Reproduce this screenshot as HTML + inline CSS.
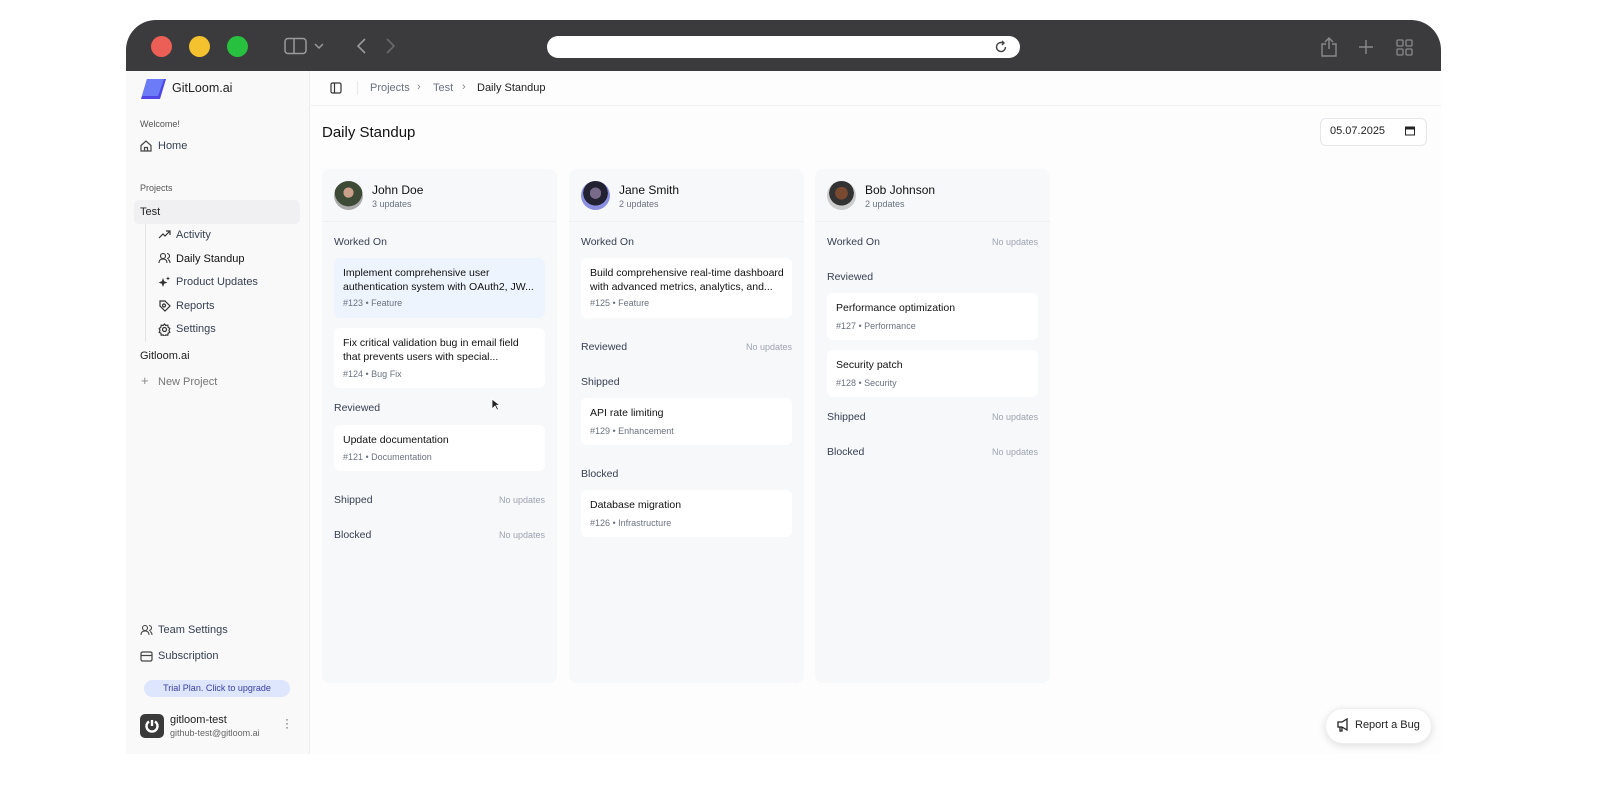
<!DOCTYPE html>
<html><head><meta charset="utf-8"><style>
*{box-sizing:border-box;margin:0;padding:0}
body{width:1600px;height:800px;background:#fff;font-family:"Liberation Sans",sans-serif;position:relative;overflow:hidden;color:#111827}
.a{position:absolute}
.frame{left:126px;top:20px;width:1315px;height:734px;border-radius:30px 30px 0 0;overflow:hidden;background:#fdfdfd}
.bar{left:0;top:0;width:1315px;height:51px;background:#3b3b3d}
.dot{width:21px;height:21px;border-radius:50%;top:16px}
.side{left:0;top:51px;width:184px;height:683px;background:#f9f9fa;border-right:1px solid #ececee}
.t{position:absolute;white-space:nowrap}
.s11{font-size:11px}.s10{font-size:9.5px}
.col{width:235px;height:514px;top:149px;background:#f7f8fa;border-radius:8px}
.ch{position:absolute;left:0;top:0;width:235px;height:53px;border-bottom:1px solid #eef0f2}
.card{position:absolute;left:12px;width:211px;background:#fff;border-radius:6px}
.ct{position:absolute;left:9px;top:9px;font-size:10.5px;line-height:13.5px;color:#111}
.cm{position:absolute;left:9px;font-size:9px;color:#6b7280}
.sec{position:absolute;left:12px;font-size:10.5px;color:#374151}
.nu{position:absolute;right:12px;font-size:9px;color:#9ca3af}
.av{position:absolute;left:12px;top:12px;width:29px;height:29px;border-radius:50%}
.nm{position:absolute;left:50px;top:14px;font-size:12px;color:#111}
.up{position:absolute;left:50px;top:30px;font-size:9px;color:#6b7280}
.nav{font-size:11px;color:#374151}
</style></head><body>
<div class="a frame">
 <div class="a bar">
  <div class="a dot" style="left:25px;background:#ec5f56"></div>
  <div class="a dot" style="left:63px;background:#f4c22e"></div>
  <div class="a dot" style="left:101px;background:#27c13f"></div>
  <svg class="a" style="left:158px;top:17px" width="46" height="18" viewBox="0 0 46 18" fill="none" stroke="#9a9a9c" stroke-width="1.5"><rect x="1" y="1.5" width="21" height="15" rx="3"/><line x1="10" y1="1.5" x2="10" y2="16.5"/><path d="M31 7l4 4 4-4"/></svg>
  <svg class="a" style="left:228px;top:18px" width="45" height="16" fill="none" stroke-width="1.6"><path d="M11 1L4 8l7 7" stroke="#9a9a9c"/><path d="M33 1l7 7-7 7" stroke="#6a6a6c"/></svg>
  <div class="a" style="left:421px;top:16px;width:473px;height:22px;background:#fff;border-radius:11px"></div>
  <svg class="a" style="left:868px;top:20px" width="14" height="14" fill="none" stroke="#444" stroke-width="1.4"><path d="M11.5 7A4.5 4.5 0 1 1 9 3"/><path d="M8 1l2 2-2 2"/></svg>
  <svg class="a" style="left:1194px;top:17px" width="18" height="20" fill="none" stroke="#8a8a8c" stroke-width="1.4"><path d="M6 7H2v12h14V7h-4M9 12V1M5 5l4-4 4 4"/></svg>
  <svg class="a" style="left:1232px;top:19px" width="16" height="16" stroke="#8a8a8c" stroke-width="1.4"><path d="M8 1v14M1 8h14"/></svg>
  <svg class="a" style="left:1270px;top:19px" width="17" height="17" fill="none" stroke="#8a8a8c" stroke-width="1.3"><rect x="1" y="1" width="6" height="6" rx="1"/><rect x="10" y="1" width="6" height="6" rx="1"/><rect x="1" y="10" width="6" height="6" rx="1"/><rect x="10" y="10" width="6" height="6" rx="1"/></svg>
 </div>
 <div class="a side">
  <svg class="a" style="left:14px;top:7px" width="26" height="22"><polygon points="7,1 26,1 20,21 1,21" fill="#4f46e5"/><polygon points="7,1 24,1 18,18 2,18" fill="#6b7cf6"/></svg>
  <div class="t" style="left:46px;top:10px;font-size:12.5px;color:#222">GitLoom.ai</div>
  <div class="t" style="left:14px;top:48px;font-size:9px;color:#555">Welcome!</div>
  <svg class="a" style="left:14px;top:69px" width="12" height="12" fill="none" stroke="#444" stroke-width="1.2"><path d="M1 5.5L6 1l5 4.5V11H1z"/><path d="M4.5 11V7.5h3V11"/></svg>
  <div class="t nav" style="left:32px;top:69px">Home</div>
  <div class="t" style="left:14px;top:112px;font-size:9px;color:#555">Projects</div>
  <div class="a" style="left:8px;top:129px;width:166px;height:24px;background:#f0f0f2;border-radius:5px"></div>
  <div class="t nav" style="left:14px;top:135px;color:#222">Test</div>
  <div class="a" style="left:19px;top:153px;width:1px;height:118px;background:#e4e4e7"></div>
  <svg class="a" style="left:32px;top:159px" width="13" height="10" fill="none" stroke="#333" stroke-width="1.2"><path d="M1 8l4-4 2 2 5-5M8 1h4v4"/></svg>
  <div class="t nav" style="left:50px;top:158px">Activity</div>
  <svg class="a" style="left:32px;top:181px" width="13" height="12" fill="none" stroke="#333" stroke-width="1.1"><circle cx="5" cy="4" r="2.5"/><path d="M1 11c0-3 2-4 4-4s4 1 4 4M9 1.5a2.5 2.5 0 0 1 0 5M12 11c0-2-1-3-2-3.5"/></svg>
  <div class="t nav" style="left:50px;top:182px;color:#111">Daily Standup</div>
  <svg class="a" style="left:32px;top:205px" width="13" height="12" fill="#333"><path d="M5 2l1.2 3.3L9.5 6.5 6.2 7.7 5 11 3.8 7.7.5 6.5l3.3-1.2z"/><path d="M10 .5l.6 1.4 1.4.6-1.4.6-.6 1.4-.6-1.4L8 2.5l1.4-.6z"/></svg>
  <div class="t nav" style="left:50px;top:205px">Product Updates</div>
  <svg class="a" style="left:32px;top:228px" width="13" height="13" fill="none" stroke="#333" stroke-width="1.2"><path d="M2 2l5 0 5 5-5 5-5-5z"/><circle cx="6" cy="6.5" r="1.5"/></svg>
  <div class="t nav" style="left:50px;top:229px">Reports</div>
  <svg class="a" style="left:32px;top:252px" width="13" height="13" fill="none" stroke="#333" stroke-width="1.2"><circle cx="6.5" cy="6.5" r="2"/><path d="M6.5 1l1.3 1.5 2-.3.3 2L11.8 5.5 11 7.5l.8 1.8-1.7.9-.3 2-2-.3-1.3 1.6-1.3-1.6-2 .3-.3-2-1.7-.9L2 7.5 1.2 5.5 2.9 4.2l.3-2 2 .3z"/></svg>
  <div class="t nav" style="left:50px;top:252px">Settings</div>
  <div class="t nav" style="left:14px;top:279px;color:#222">Gitloom.ai</div>
  <div class="t" style="left:15px;top:302px;font-size:13px;color:#888">+</div>
  <div class="t nav" style="left:32px;top:305px;color:#777">New Project</div>
  <svg class="a" style="left:14px;top:553px" width="13" height="12" fill="none" stroke="#444" stroke-width="1.1"><circle cx="5" cy="4" r="2.5"/><path d="M1 11c0-3 2-4 4-4s4 1 4 4M9 1.5a2.5 2.5 0 0 1 0 5M12 11c0-2-1-3-2-3.5"/></svg>
  <div class="t nav" style="left:32px;top:553px">Team Settings</div>
  <svg class="a" style="left:14px;top:580px" width="13" height="11" fill="none" stroke="#444" stroke-width="1.2"><rect x="1" y="1" width="11" height="9" rx="1.5"/><path d="M1 4.5h11"/></svg>
  <div class="t nav" style="left:32px;top:579px">Subscription</div>
  <div class="a" style="left:18px;top:609px;width:146px;height:17px;background:#dde6fd;border-radius:9px;font-size:9px;color:#3b3fa0;text-align:center;line-height:17px">Trial Plan. Click to upgrade</div>
  <div class="a" style="left:14px;top:643px;width:24px;height:24px;background:#3a3a3a;border-radius:5px"></div>
  <svg class="a" style="left:18px;top:647px" width="16" height="16" fill="none" stroke="#fff" stroke-width="2.4"><path d="M5 3.5A5.5 5.5 0 1 0 11 3.5"/><path d="M8 2v6"/></svg>
  <div class="t" style="left:44px;top:643px;font-size:11px;color:#222">gitloom-test</div>
  <div class="t" style="left:44px;top:657px;font-size:9px;color:#666">github-test@gitloom.ai</div>
  <div class="t" style="left:159px;top:646px;font-size:12px;color:#555;line-height:4px">·<br>·<br>·</div>
 </div>
 <div class="a" style="left:185px;top:51px;width:1130px;height:35px;border-bottom:1px solid #eef0f2"></div>
 <svg class="a" style="left:204px;top:62px" width="12" height="12" fill="none" stroke="#333" stroke-width="1.2"><rect x="1" y="1" width="10" height="10" rx="1.5"/><path d="M4.5 1v10"/></svg>
 <div class="a" style="left:231px;top:61px;width:1px;height:14px;background:#e5e7eb"></div>
 <div class="t" style="left:244px;top:62px;font-size:11px;color:#6b7280">Projects</div>
 <div class="t" style="left:291px;top:61px;font-size:11px;color:#888">›</div>
 <div class="t" style="left:307px;top:62px;font-size:11px;color:#6b7280">Test</div>
 <div class="t" style="left:336px;top:61px;font-size:11px;color:#888">›</div>
 <div class="t" style="left:351px;top:62px;font-size:11px;color:#222">Daily Standup</div>
 <div class="t" style="left:196px;top:104px;font-size:15px;color:#111">Daily Standup</div>
 <div class="a" style="left:1194px;top:98px;width:107px;height:28px;border:1px solid #e5e7eb;border-radius:6px;background:#fff"></div>
 <div class="t" style="left:1204px;top:105px;font-size:11px;color:#222">05.07.2025</div>
 <svg class="a" style="left:1279px;top:106px" width="10" height="10"><rect x="0.5" y="1" width="9" height="8" fill="none" stroke="#222"/><rect x="0.5" y="1" width="9" height="2.5" fill="#222"/></svg>

 <!-- col1 -->
 <div class="a col" style="left:196px">
  <div class="ch"><div class="av" style="background:radial-gradient(circle at 50% 40%,#caa08a 0 22%,#3d4a36 23% 60%,#aaa 61%)"></div><div class="nm">John Doe</div><div class="up">3 updates</div></div>
  <div class="sec" style="top:67px">Worked On</div>
  <div class="card" style="top:89px;height:60px;background:#eef4fd"><div class="ct">Implement comprehensive user<br>authentication system with OAuth2, JW...</div><div class="cm" style="top:40px">#123 • Feature</div></div>
  <div class="card" style="top:159px;height:60px"><div class="ct">Fix critical validation bug in email field<br>that prevents users with special...</div><div class="cm" style="top:41px">#124 • Bug Fix</div></div>
  <div class="sec" style="top:233px">Reviewed</div>
  <div class="card" style="top:256px;height:46px"><div class="ct">Update documentation</div><div class="cm" style="top:27px">#121 • Documentation</div></div>
  <div class="sec" style="top:325px">Shipped</div><div class="nu" style="top:326px">No updates</div>
  <div class="sec" style="top:360px">Blocked</div><div class="nu" style="top:361px">No updates</div>
 </div>
 <!-- col2 -->
 <div class="a col" style="left:443px">
  <div class="ch"><div class="av" style="background:radial-gradient(circle at 50% 42%,#7a6a8a 0 25%,#223 26% 55%,#8a8fe0 56%)"></div><div class="nm">Jane Smith</div><div class="up">2 updates</div></div>
  <div class="sec" style="top:67px">Worked On</div>
  <div class="card" style="top:89px;height:60px"><div class="ct">Build comprehensive real-time dashboard<br>with advanced metrics, analytics, and...</div><div class="cm" style="top:40px">#125 • Feature</div></div>
  <div class="sec" style="top:172px">Reviewed</div><div class="nu" style="top:173px">No updates</div>
  <div class="sec" style="top:207px">Shipped</div>
  <div class="card" style="top:229px;height:47px"><div class="ct">API rate limiting</div><div class="cm" style="top:28px">#129 • Enhancement</div></div>
  <div class="sec" style="top:299px">Blocked</div>
  <div class="card" style="top:321px;height:47px"><div class="ct">Database migration</div><div class="cm" style="top:28px">#126 • Infrastructure</div></div>
 </div>
 <!-- col3 -->
 <div class="a col" style="left:689px">
  <div class="ch"><div class="av" style="background:radial-gradient(circle at 50% 42%,#7a4a30 0 28%,#333 29% 55%,#ccc 56%)"></div><div class="nm">Bob Johnson</div><div class="up">2 updates</div></div>
  <div class="sec" style="top:67px">Worked On</div><div class="nu" style="top:68px">No updates</div>
  <div class="sec" style="top:102px">Reviewed</div>
  <div class="card" style="top:124px;height:47px"><div class="ct">Performance optimization</div><div class="cm" style="top:28px">#127 • Performance</div></div>
  <div class="card" style="top:181px;height:47px"><div class="ct">Security patch</div><div class="cm" style="top:28px">#128 • Security</div></div>
  <div class="sec" style="top:242px">Shipped</div><div class="nu" style="top:243px">No updates</div>
  <div class="sec" style="top:277px">Blocked</div><div class="nu" style="top:278px">No updates</div>
 </div>
 <svg class="a" style="left:365px;top:378px" width="10" height="13"><path d="M1 1v10l3-3 2 4 1.5-.7-2-4H9z" fill="#222" stroke="#fff" stroke-width=".8"/></svg>
 <div class="a" style="left:1199px;top:688px;width:107px;height:36px;background:#fff;border-radius:18px;box-shadow:0 2px 8px rgba(0,0,0,.12);border:1px solid #eee"></div>
 <svg class="a" style="left:1210px;top:698px" width="14" height="14" fill="none" stroke="#222" stroke-width="1.3"><path d="M2 4h4l5-3v11L6 9H2zM4 9v4h2V9"/></svg>
 <div class="t" style="left:1229px;top:699px;font-size:11px;color:#222">Report a Bug</div>
</div>
</body></html>
